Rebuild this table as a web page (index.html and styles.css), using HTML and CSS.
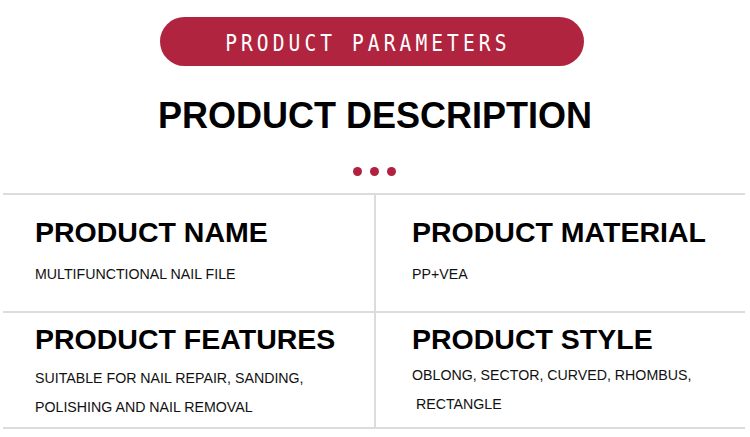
FILE: index.html
```html
<!DOCTYPE html>
<html>
<head>
<meta charset="utf-8">
<link rel="stylesheet" href="styles.css">
</head>
<body>
<div class="page">
  <div class="pill"><span class="pill-text">PRODUCT PARAMETERS</span></div>
  <h1 class="title">PRODUCT DESCRIPTION</h1>
  <div class="dots"><i></i><i></i><i></i></div>
  <div class="table">
    <div class="cell row1 left">
      <h2 class="head">PRODUCT NAME</h2>
      <p class="body">MULTIFUNCTIONAL NAIL FILE</p>
    </div>
    <div class="cell row1 right">
      <h2 class="head">PRODUCT MATERIAL</h2>
      <p class="body">PP+VEA</p>
    </div>
    <div class="cell row2 left">
      <h2 class="head">PRODUCT FEATURES</h2>
      <p class="body b-left">SUITABLE FOR NAIL REPAIR, SANDING,<br>POLISHING AND NAIL REMOVAL</p>
    </div>
    <div class="cell row2 right">
      <h2 class="head">PRODUCT STYLE</h2>
      <p class="body b-right">OBLONG, SECTOR, CURVED, RHOMBUS,<br>&nbsp;RECTANGLE</p>
    </div>
  </div>
</div>
</body>
</html>
```

FILE: styles.css
```css
* { box-sizing: border-box; }
html, body { margin: 0; padding: 0; background: #fff; }
body { font-family: "Liberation Sans", Arial, sans-serif; color: #111; }

.page { width: 750px; height: 437px; overflow: hidden; padding-top: 17px; }

.pill {
  margin-left: 160px;
  width: 424px;
  height: 49px;
  border-radius: 25px;
  background: #b1243f;
  display: flex;
  align-items: center;
  justify-content: center;
  padding: 4px 8px 0 0;
}
.pill-text {
  font-family: "DejaVu Sans Mono", "Liberation Mono", monospace;
  font-size: 23px;
  letter-spacing: 4.8px;
  color: #fff;
  line-height: 23px;
  display: inline-block;
  white-space: nowrap;
  transform: scaleX(0.85);
}

.title {
  margin: 32px 0 0;
  text-align: center;
  font-size: 36px;
  line-height: 36px;
  font-weight: bold;
  color: #000;
}

.dots {
  margin-top: 33px;
  display: flex;
  justify-content: center;
  gap: 8px;
  padding-right: 1px;
}
.dots i {
  display: block;
  width: 9px;
  height: 9px;
  border-radius: 50%;
  background: #b1223f;
}

.table {
  margin: 17px 0 0 3px;
  width: 742px;
  display: grid;
  grid-template-columns: 373px 369px;
}
.cell { border-top: 2px solid #dcdcdc; }
.cell.left { border-right: 2px solid #dcdcdc; padding-left: 32px; }
.cell.right { padding-left: 36px; }
.row1 { height: 118px; padding-top: 23px; }
.row2 { height: 118px; padding-top: 12px; border-bottom: 2px solid #dcdcdc; }

.head {
  margin: 0;
  font-size: 28.5px;
  line-height: 29px;
  font-weight: bold;
  color: #000;
  white-space: nowrap;
}
.body {
  margin: 13px 0 0;
  font-size: 14.2px;
  line-height: 29px;
  white-space: nowrap;
}
.b-left { margin-top: 10px; }
.b-right { margin-top: 7px; }
```
